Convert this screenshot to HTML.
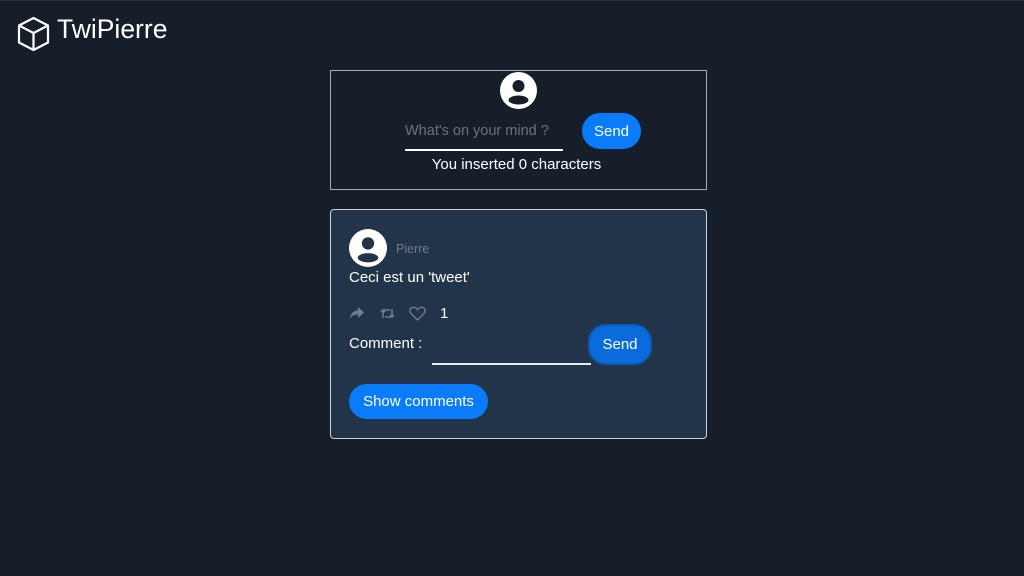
<!DOCTYPE html>
<html><head><style>
body{margin:0;width:1024px;height:576px;background:#151e29;font-family:"Liberation Sans",sans-serif;color:#fff;position:relative;overflow:hidden}
.a{position:absolute}
.btn{position:absolute;background:#0a7cf9;color:#fff;border-radius:18px;font-size:15px;text-align:center}
</style></head><body>
<div class="a" style="left:0;top:0;width:1024px;height:1px;background:#2a3340"></div>
<svg class="a" style="left:16px;top:16px" width="35" height="36" viewBox="0 0 35 36" fill="none" stroke="#fff" stroke-width="2.2" stroke-linejoin="round"><path d="M17.5 2 L32 9.5 V26.5 L17.5 34 L3 26.5 V9.5 Z"/><path d="M3 9.5 L17.5 17 L32 9.5 M17.5 17 V34"/></svg>
<div class="a" style="left:57px;top:14px;font-size:26.5px">TwiPierre</div>

<div class="a" style="left:330px;top:70px;width:375px;height:118px;border:1px solid #a9adb2"></div>
<svg class="a" style="left:500px;top:72px" width="37" height="37" viewBox="0 0 37 37"><circle cx="18.5" cy="18.5" r="18.5" fill="#fff"/><circle cx="18.5" cy="14" r="6" fill="#151e29"/><ellipse cx="18.5" cy="28" rx="10" ry="4.5" fill="#151e29"/></svg>
<div class="a" style="left:405px;top:123px;font-size:14.5px;color:#6d737b">What's on your mind ?</div>
<div class="a" style="left:405px;top:149px;width:158px;height:2px;background:#fff"></div>
<div class="btn" style="left:582px;top:113px;width:59px;height:36px;line-height:37px">Send</div>
<div class="a" style="left:328px;top:156px;width:377px;text-align:center;font-size:15px">You inserted 0 characters</div>

<div class="a" style="left:330px;top:209px;width:375px;height:228px;border:1px solid #d0d4d8;border-radius:4px;background:#223449"></div>
<svg class="a" style="left:349px;top:229px" width="38" height="38" viewBox="0 0 37 37"><circle cx="18.5" cy="18.5" r="18.5" fill="#fff"/><circle cx="18.5" cy="14" r="6" fill="#223449"/><ellipse cx="18.5" cy="28" rx="10" ry="4.5" fill="#223449"/></svg>
<div class="a" style="left:396px;top:242px;font-size:12.5px;color:#6f7d8c">Pierre</div>
<div class="a" style="left:349px;top:269px;font-size:15px">Ceci est un 'tweet'</div>
<svg class="a" style="left:349px;top:306px" width="16" height="14" viewBox="0 0 16 14"><path d="M9 1 L15 6.5 L9 12 V8.5 C5 8.5 2.5 9.5 1 13 C1.5 7 5 4.5 9 4.5 Z" fill="#6f7d8c"/></svg>
<svg class="a" style="left:380px;top:307px" width="15" height="13" viewBox="0 0 15 13" fill="none" stroke="#6f7d8c" stroke-width="1.5"><path d="M3 11 V3 H10 M1 5 L3 3 L5 5 M12 2 V10 H5 M10 8 L12 10 L14 8"/></svg>
<svg class="a" style="left:409px;top:306px" width="17" height="15" viewBox="0 0 17 15" fill="none" stroke="#6f7d8c" stroke-width="1.4"><path d="M8.5 14 L2 7.5 C0 5.5 0.8 1.5 4.3 1.3 C6.3 1.2 7.7 2.5 8.5 3.8 C9.3 2.5 10.7 1.2 12.7 1.3 C16.2 1.5 17 5.5 15 7.5 Z"/></svg>
<div class="a" style="left:440px;top:305px;font-size:15px">1</div>
<div class="a" style="left:349px;top:335px;font-size:15px">Comment :</div>
<div class="a" style="left:432px;top:363px;width:159px;height:2px;background:#e8eaec"></div>
<div class="btn" style="left:588px;top:324px;width:60px;height:37px;line-height:38px;background:#0a6bdc;border:2px solid #0b5cb5">Send</div>
<div class="btn" style="left:349px;top:384px;width:139px;height:35px;line-height:36px">Show comments</div>
</body></html>
